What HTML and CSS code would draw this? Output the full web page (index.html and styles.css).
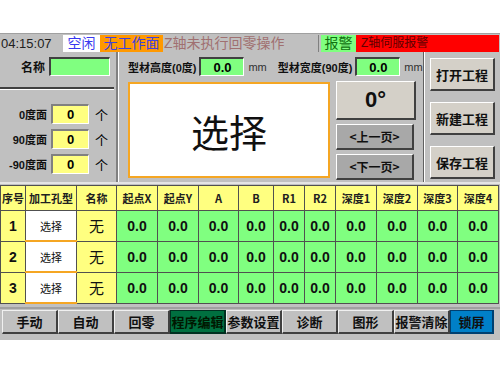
FILE: index.html
```html
<!DOCTYPE html>
<html lang="zh-CN">
<head>
    <meta charset="UTF-8">
    <title>工程编辑</title>
    <link rel="stylesheet" href="styles.css">
</head>
<body>
<div class="screen">

    <!-- 状态栏 -->
    <div class="status-bar">
        <span class="st-time">04:15:07</span>
        <span class="st-idle">空闲</span>
        <span class="st-face">无工作面</span>
        <span class="st-msg">Z轴未执行回零操作</span>
        <span class="st-alarm">报警</span>
        <span class="st-red">Z轴伺服报警</span>
    </div>

    <!-- 主区域 -->
    <div class="main">
        <div class="left-panel">
            <div class="name-row">
                <span class="lbl">名称</span>
                <span class="field green name-field"></span>
            </div>
            <div class="sep"></div>
            <div class="face-list">
                <div class="face-row"><span class="lbl">0度面</span><span class="field yellow face-field">0</span><span class="unit">个</span></div>
                <div class="face-row"><span class="lbl">90度面</span><span class="field yellow face-field">0</span><span class="unit">个</span></div>
                <div class="face-row"><span class="lbl">-90度面</span><span class="field yellow face-field">0</span><span class="unit">个</span></div>
            </div>
        </div>

        <div class="mid-panel">
            <div class="size-row">
                <span class="lbl">型材高度(0度)</span>
                <span class="field green size-field">0.0</span>
                <span class="mm">mm</span>
                <span class="lbl lbl-w">型材宽度(90度)</span>
                <span class="field green size-field">0.0</span>
                <span class="mm">mm</span>
            </div>
            <div class="mid-body">
                <div class="select-box">选择</div>
                <div class="angle-col">
                    <div class="btn angle-btn">0°</div>
                    <div class="btn page-btn">&lt;上一页&gt;</div>
                    <div class="btn page-btn">&lt;下一页&gt;</div>
                </div>
            </div>
        </div>

        <div class="right-panel">
            <div class="btn proj-btn">打开工程</div>
            <div class="btn proj-btn">新建工程</div>
            <div class="btn proj-btn">保存工程</div>
        </div>
    </div>

    <!-- 孔位表 -->
    <div class="table-wrap">
    <table class="hole-table">
        <colgroup>
            <col style="width:25px"><col style="width:51px"><col style="width:40px">
            <col style="width:41px"><col style="width:41px"><col style="width:40px">
            <col style="width:35px"><col style="width:31px"><col style="width:31px">
            <col style="width:41px"><col style="width:41px"><col style="width:40px"><col style="width:41px">
        </colgroup>
        <tr class="head">
            <th>序号</th><th>加工孔型</th><th>名称</th><th>起点X</th><th>起点Y</th><th>A</th><th>B</th>
            <th>R1</th><th>R2</th><th>深度1</th><th>深度2</th><th>深度3</th><th>深度4</th>
        </tr>
        <tr>
            <td class="c-no">1</td><td class="c-type">选择</td><td class="c-name">无</td>
            <td>0.0</td><td>0.0</td><td>0.0</td><td>0.0</td><td>0.0</td><td>0.0</td><td>0.0</td><td>0.0</td><td>0.0</td><td>0.0</td>
        </tr>
        <tr>
            <td class="c-no">2</td><td class="c-type">选择</td><td class="c-name">无</td>
            <td>0.0</td><td>0.0</td><td>0.0</td><td>0.0</td><td>0.0</td><td>0.0</td><td>0.0</td><td>0.0</td><td>0.0</td><td>0.0</td>
        </tr>
        <tr>
            <td class="c-no">3</td><td class="c-type">选择</td><td class="c-name">无</td>
            <td>0.0</td><td>0.0</td><td>0.0</td><td>0.0</td><td>0.0</td><td>0.0</td><td>0.0</td><td>0.0</td><td>0.0</td><td>0.0</td>
        </tr>
    </table>
    </div>

    <!-- 底部菜单 -->
    <div class="menu-bar">
        <div class="btn menu-btn">手动</div>
        <div class="btn menu-btn">自动</div>
        <div class="btn menu-btn">回零</div>
        <div class="btn menu-btn active-green">程序编辑</div>
        <div class="btn menu-btn">参数设置</div>
        <div class="btn menu-btn">诊断</div>
        <div class="btn menu-btn">图形</div>
        <div class="btn menu-btn">报警清除</div>
        <div class="btn menu-btn active-blue">锁屏</div>
    </div>
</div>
</body>
</html>
```

FILE: styles.css
```css
body { margin: 0; background: #fff; font-family: "Liberation Sans", "Noto Sans CJK SC", sans-serif; }
.screen { margin-top: 33px; width: 500px; height: 307px; background: #c0c0c0; overflow: hidden; }

/* 状态栏 */
.status-bar { display: flex; height: 18px; border-top: 1px solid #a0a0a0; line-height: 17px; font-size: 14px; }
.status-bar span { display: block; height: 17px; margin-top: 1px; white-space: nowrap; overflow: hidden; }
.st-time { width: 62px; padding-left: 1px; font-size: 13px; color: #202020; }
.st-idle { width: 37px; background: #fff; color: #3838f0; text-align: center; }
.st-face { width: 63px; background: #ff9900; color: #4040e0; text-align: center; }
.st-msg { width: 154px; color: #a07070; border-right: 1px solid #808080; padding-left: 1px; }
.st-alarm { width: 35px; margin-left: 2px; background: #80ff80; color: #107010; text-align: center; }
.st-red { flex: 1; background: #ff0000; color: #600000; font-size: 12px; padding-left: 5px; margin-right: 1px; }

.main { display: flex; height: 130px; }
.lbl { font-size: 11px; font-weight: bold; color: #101010; white-space: nowrap; }
.field { display: flex; align-items: center; justify-content: center; box-sizing: border-box;
         border-top: 2px solid #404040; border-left: 2px solid #404040;
         border-bottom: 1px solid #fff; border-right: 1px solid #fff;
         font-size: 13px; font-weight: bold; }
.green { background: #80ff80; }
.yellow { background: #ffff80; border-color: #808080 #fff #fff #808080; }

/* 左侧 */
.left-panel { width: 116px; border-right: 2px solid #808080; box-shadow: 1px 0 0 #fff; }
.name-row { display: flex; align-items: center; height: 18px; margin-top: 5px; }
.name-row .lbl { width: 45px; text-align: right; font-size: 12px; }
.name-field { width: 61px; height: 19px; margin-left: 4px; }
.sep { height: 2px; background: #404040; border-bottom: 1px solid #fff; margin: 12px 2px 0 0; }
.face-list { display: flex; flex-direction: column; gap: 5px; margin-top: 14px; }
.face-row { display: flex; align-items: center; height: 20px; }
.face-row .lbl { width: 47px; text-align: right; }
.face-field { width: 38px; height: 20px; margin-left: 4px; }
.unit { margin-left: 6px; font-size: 13px; }

/* 中间 */
.mid-panel { width: 306px; padding-left: 10px; box-sizing: border-box; border-right: 1px solid #606060; }
.size-row { display: flex; align-items: center; height: 19px; margin-top: 5px; }
.size-field { width: 45px; height: 19px; margin-left: 3px; }
.mm { font-size: 11px; color: #303030; margin-left: 4px; margin-right: 11px; }
.size-row .mm:last-child { margin-right: 0; }
.mid-body { display: flex; margin-top: 6px; }
.select-box { width: 202px; height: 96px; box-sizing: border-box; border: 2px solid #f5a623; background: #fff;
              display: flex; align-items: center; justify-content: center;
              font-family: "Noto Sans CJK SC", sans-serif; font-size: 38px; color: #101010; }
.angle-col { display: flex; flex-direction: column; gap: 4px; margin-left: 6px; margin-top: -1px; }

.btn { box-sizing: border-box; display: flex; align-items: center; justify-content: center;
       border-top: 1px solid #fff; border-left: 1px solid #fff;
       border-bottom: 2px solid #404040; border-right: 2px solid #404040;
       font-family: "Noto Sans CJK SC", sans-serif; font-weight: bold; color: #101010; white-space: nowrap; }
.angle-btn { width: 80px; height: 39px; background: #d4d0c8; font-family: "Liberation Sans", sans-serif; font-size: 22px; }
.page-btn { width: 78px; height: 26px; background: #a8a8a8; font-size: 12px; }

/* 右侧 */
.right-panel { flex: 1; border-left: 1px solid #fff; display: flex; flex-direction: column; gap: 11px; padding: 6px 0 0 5px; }
.proj-btn { width: 65px; height: 33px; background: #d4d0c8; font-size: 13px; }

/* 表格 */
.table-wrap { border-top: 2px solid #e4e4e4; padding-top: 1px; }
.hole-table { border-collapse: collapse; width: 498px; table-layout: fixed; }
.hole-table th, .hole-table td { border: 1px solid #505050; text-align: center; padding: 0; line-height: 14px; overflow: hidden; }
.hole-table th { height: 24px; background: #ffff80; font-family: "Noto Sans CJK SC", sans-serif; font-size: 11px; font-weight: bold; color: #202020; }
.hole-table td { height: 29px; background: #80ff80; font-size: 14px; font-weight: bold; color: #101010; }
.hole-table td.c-no { background: #ffff80; }
.hole-table td.c-type { background: #fff; border-bottom: 2px solid #f5a623; font-family: "Noto Sans CJK SC", sans-serif; font-size: 11px; font-weight: normal; }
.hole-table td.c-name { background: #ffff80; font-family: "Noto Sans CJK SC", sans-serif; font-size: 15px; font-weight: normal; }

/* 底部菜单 */
.menu-bar { display: flex; margin-top: 3px; padding: 1px 0 0 2px; height: 24px; border-top: 2px solid #a0a0a0; }
.menu-btn { width: 56px; height: 24px; background: #c0c0c0; font-size: 13px; border-top-color: #f0f0f0; border-left-color: #f0f0f0; border-width: 1px 2px 2px 1px; }
.active-green { background: #007040; border-color: #003020; color: #001800; }
.active-blue { width: 44px; background: #0080c8; border-color: #004070; }
```
